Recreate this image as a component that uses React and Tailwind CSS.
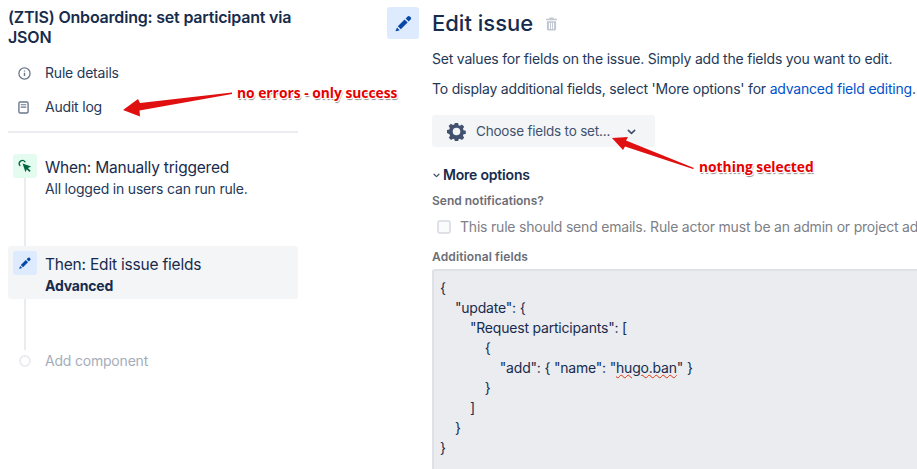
const Pencil = ({ className }) => (
  <svg viewBox="0 0 24 24" className={className} fill="currentColor">
    <path d="M17.2 3.2a2 2 0 0 1 2.8 0l1 1a2 2 0 0 1 0 2.8L18.6 9.4 14.8 5.6z" />
    <path d="M13.4 7 17.2 10.8 8.6 19.4 4.8 15.6z" />
    <path d="M3.8 17 7.2 20.4 2.6 21.8a.4.4 0 0 1-.5-.5z" />
  </svg>
);

const Cursor = () => (
  <svg viewBox="0 0 16 16" className="w-[14px] h-[14px] text-[#006644]" fill="none">
    <path d="M2.2 7.5A3.6 3.6 0 0 1 8 3.2" stroke="currentColor" strokeWidth="1.5" strokeLinecap="round" />
    <path d="M5.2 5 15 8.6l-3.6 1.6 3 3.2-1.4 1.4-3-3.2L8.6 15z" fill="currentColor" />
  </svg>
);

const Gear = () => (
  <svg viewBox="0 0 20 20" className="w-[19px] h-[19px] text-[#42526e]" fill="currentColor">
    <path
      fillRule="evenodd"
      d="M8.3 1h3.4l.5 2.4 1.4.6 2.1-1.3 2.4 2.4-1.3 2.1.6 1.4 2.4.5v3.4l-2.4.5-.6 1.4 1.3 2.1-2.4 2.4-2.1-1.3-1.4.6-.5 2.4H8.3l-.5-2.4-1.4-.6-2.1 1.3-2.4-2.4 1.3-2.1-.6-1.4L0 11.7V8.3l2.4-.5.6-1.4-1.3-2.1 2.4-2.4 2.1 1.3 1.4-.6zM10 6a4 4 0 1 0 0 8 4 4 0 0 0 0-8z"
    />
  </svg>
);

const Chevron = ({ className }) => (
  <svg viewBox="0 0 10 6" className={className} fill="none" stroke="currentColor" strokeWidth="1.8" strokeLinecap="round" strokeLinejoin="round">
    <path d="M1.5 1.2 5 4.6l3.5-3.4" />
  </svg>
);

const Note = ({ className, children }) => (
  <div className={`absolute font-['Open_Sans',sans-serif] font-bold text-[13.8px] leading-[18px] tracking-normal whitespace-nowrap text-[#e60000] [text-shadow:1px_1px_0_#fff,-1px_-1px_0_#fff,1px_-1px_0_#fff,-1px_1px_0_#fff,1px_2px_1px_#888] ${className}`}>
    {children}
  </div>
);

export default function App() {
  return (
    <div className="relative flex w-[917px] h-[469px] overflow-hidden bg-white font-['Inter',sans-serif] tracking-[-0.0125em] text-[#172b4d]">
      {/* left column */}
      <div className="w-[387px] shrink-0 pl-2 pt-[7px]">
        <div className="w-[290px]">
          <h1 className="text-base leading-5 font-semibold w-[285px]">(ZTIS) Onboarding: set participant via JSON</h1>

          <div className="mt-[16px] flex items-center h-5 text-sm text-[#253858]">
            <svg viewBox="0 0 14 14" className="w-[13px] h-[13px] ml-[10px] mr-[14px] text-[#6b778c]" fill="none">
              <circle cx="7" cy="7" r="6" stroke="currentColor" strokeWidth="1.4" />
              <path d="M7 6.2v3.6M7 3.8v1" stroke="currentColor" strokeWidth="1.5" />
            </svg>
            Rule details
          </div>
          <div className="mt-[14px] flex items-center h-5 text-sm text-[#253858]">
            <svg viewBox="0 0 12 14" className="w-[11px] h-[13px] ml-[10px] mr-[16px] text-[#6b778c]" fill="none">
              <rect x="1" y="1" width="10" height="12" rx="1.5" stroke="currentColor" strokeWidth="1.5" />
              <path d="M3 4h6M3 6.5h6" stroke="currentColor" strokeWidth="1.3" />
            </svg>
            Audit log
          </div>
          <div className="mt-[14px] h-[2px] bg-[#ebecf0]" />

          {/* steps */}
          <div className="relative mt-[21px]">
            <div className="absolute left-[16px] top-[20px] w-[2px] h-[176px] bg-[#ebecf0]" />

            <div className="relative flex pl-[5px]">
              <div className="w-6 h-6 rounded-[3px] bg-[#e3fcef] flex items-center justify-center">
                <Cursor />
              </div>
              <div className="ml-2">
                <div className="pt-px text-[15.5px] leading-[26px]">When: Manually triggered</div>
                <div className="text-sm leading-[16px] text-[#253858]">All logged in users can run rule.</div>
              </div>
            </div>

            <div className="relative mt-[49px] h-[53px] rounded-[3px] bg-[#f4f5f7] flex pl-[5px] pt-[5px]">
              <div className="w-6 h-6 rounded-[3px] bg-[#deebff] flex items-center justify-center">
                <Pencil className="w-[14px] h-[14px] text-[#0747a6]" />
              </div>
              <div className="ml-2">
                <div className="pt-px text-[15.5px] leading-[26px]">Then: Edit issue fields</div>
                <div className="text-sm leading-[16px] font-bold">Advanced</div>
              </div>
            </div>

            <div className="relative mt-[52px] flex items-center pl-[11px]">
              <div className="w-3 h-3 rounded-full border-2 border-[#ebecf0] bg-white" />
              <div className="ml-[14px] text-sm leading-5 text-[#a5adba]">Add component</div>
            </div>
          </div>
        </div>
      </div>

      {/* right column */}
      <div className="flex-1 min-w-0 pt-[7px]">
        <div className="flex">
          <div className="w-8 h-8 rounded-[3px] bg-[#deebff] flex items-center justify-center shrink-0">
            <Pencil className="w-[19px] h-[19px] text-[#0747a6]" />
          </div>
          <div className="ml-[13px] flex items-center h-8">
            <h2 className="text-[22px] leading-8 font-medium tracking-normal">Edit issue</h2>
            <svg viewBox="0 0 12 14" className="ml-[13px] mt-[2px] w-[11px] h-[14px] text-[#c1c7d0]" fill="currentColor">
              <path d="M4 0h4l.6 1.2H12v1.6H0V1.2h3.4z" />
              <path fillRule="evenodd" d="M1 4h10v8.5A1.5 1.5 0 0 1 9.5 14h-7A1.5 1.5 0 0 1 1 12.5zm2.2 1.6v6.8h1.2V5.6zm2.2 0v6.8h1.2V5.6zm2.2 0v6.8h1.2V5.6z" />
            </svg>
          </div>
        </div>

        <div className="ml-[45px] text-sm whitespace-nowrap">
          <p className="mt-[10px] leading-5 text-[#253858]">Set values for fields on the issue. Simply add the fields you want to edit.</p>
          <p className="mt-[10px] leading-5 text-[#253858]">
            To display additional fields, select 'More options' for <span className="text-[#0052cc]">advanced field editing</span>.
          </p>

          <div className="mt-[16px] w-[223px] h-8 rounded-[3px] bg-[#f4f5f7] flex items-center pl-[15px] text-[#42526e]">
            <Gear />
            <span className="ml-[10px] pt-px text-[13.5px]">Choose fields to set...</span>
            <Chevron className="ml-[17px] mt-px w-[9px] h-[6px] text-[#42526e]" />
          </div>

          <div className="mt-[18px] flex items-center h-5">
            <Chevron className="w-[7px] h-[5px] ml-[1px] text-[#42526e]" />
            <span className="ml-[3px] font-semibold">More options</span>
          </div>

          <div className="mt-[8px] text-xs leading-4 font-semibold tracking-normal text-[#6b6e76]">Send notifications?</div>
          <div className="mt-[8px] flex items-center h-5 text-[#7d8087]">
            <div className="ml-[5px] w-[14px] h-[14px] rounded-[3px] border-2 border-[#dfe1e6] bg-[#fafbfc] shrink-0" />
            <span className="ml-[9px]">This rule should send emails. Rule actor must be an admin or project admin.</span>
          </div>

          <div className="mt-[12px] text-xs leading-4 font-semibold tracking-[0.01em] text-[#6b6e76]">Additional fields</div>
          <pre className="mt-[4px] h-[220px] rounded-tl-[3px] border-2 border-r-0 border-b-0 border-[#dfe1e6] bg-[#ebecf0] pl-[6px] pt-[7px] text-sm leading-5 font-['Inter',sans-serif] text-[#172b4d]">
{`{
    "update": {
        "Request participants": [
            {
                "add": { "name": "`}<span className="underline decoration-wavy decoration-[#de350b] decoration-1">hugo.ban</span>{`" }
            }
        ]
    }
}`}
          </pre>
        </div>
      </div>

      {/* annotations */}
      <svg className="absolute left-0 top-0 w-[917px] h-[469px] pointer-events-none" viewBox="0 0 917 469">
        <path d="M232 92.5 140 103 138 99 123 110 140 116.5 139.5 110.5 232 94z" fill="#e01010" />
        <path d="M694 168 626 140.5 628 137 612 138 623 150 625 146.5 693 169z" fill="#e01010" />
      </svg>
      <Note className="left-[237px] top-[84px]">no errors - only success</Note>
      <Note className="left-[699px] top-[158px]">nothing selected</Note>
    </div>
  );
}
